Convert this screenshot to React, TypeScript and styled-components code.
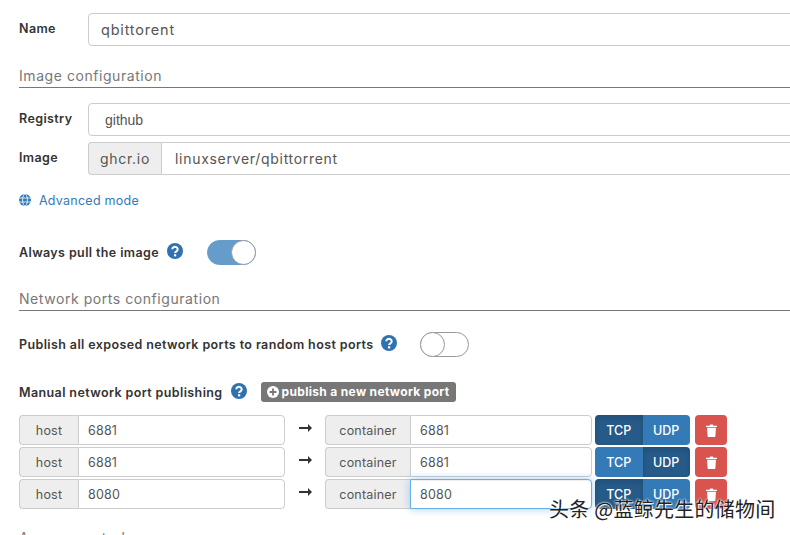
import React from "react";
import styled, { createGlobalStyle, css } from "styled-components";

const Global = createGlobalStyle`
  html, body { margin: 0; padding: 0; width: 790px; height: 535px; overflow: hidden; background: #fff; }
  body { font-family: Inter, "Liberation Sans", sans-serif; color: #333; }
`;

const Page = styled.div`
  width: 790px; height: 535px; overflow: hidden; padding: 13px 0 0 19px; box-sizing: border-box;
`;
const Column = styled.div`
  width: 790px; display: flex; flex-direction: column;
`;
const FormRow = styled.div<{ $mt?: number }>`
  display: flex; align-items: center; height: 33px; margin-top: ${p => p.$mt ?? 0}px;
`;
const Label = styled.div`
  width: 69px; flex: none; font-size: 12.5px; font-weight: 600; color: #333; margin-top: -3px; letter-spacing: .39px;
`;
const baseField = css`
  height: 33px; box-sizing: border-box; border: 1px solid #ccc; background: #fff;
  font-size: 14px; letter-spacing: .7px; color: #555; display: flex; align-items: center;
`;
const TextField = styled.div<{ $pad?: number; $sans?: boolean }>`
  ${baseField}
  flex: 1; border-radius: 4px; padding-left: ${p => p.$pad ?? 12}px; font-size: 14.5px; letter-spacing: .8px;
  ${p => p.$sans && css`font-family: "Liberation Sans", sans-serif; font-size: 14px; letter-spacing: 0;`}
`;
const Addon = styled.div`
  ${baseField}
  width: 73px; flex: none; justify-content: center; background: #eee; border-radius: 4px 0 0 4px; border-right: 0;
`;
const JoinedField = styled.div`
  ${baseField}
  flex: 1; border-radius: 0 4px 4px 0; padding-left: 13px;
`;
const SectionTitle = styled.div<{ $mt: number }>`
  margin-top: ${p => p.$mt}px; height: 21px; box-sizing: border-box; border-bottom: 1px solid #777;
  font-size: 14px; color: #777; line-height: 17px; width: 771px; letter-spacing: .56px;
`;
const LinkRow = styled.div`
  margin-top: 16px; display: flex; align-items: center; gap: 8px; height: 18px;
  font-size: 12.5px; color: #337ab7; letter-spacing: .25px;
`;
const ToggleRow = styled.div<{ $mt: number; $gap: number }>`
  margin-top: ${p => p.$mt}px; display: flex; align-items: center; height: 26px;
  font-size: 12.5px; font-weight: 600; color: #333; letter-spacing: .39px;
  & > svg { margin-left: 8px; margin-right: ${p => p.$gap}px; flex: none; margin-top: -3px; }
`;
const Switch = styled.div<{ $on?: boolean }>`
  width: 49px; height: 25px; box-sizing: border-box; border-radius: 13px; position: relative; flex: none;
  background: ${p => (p.$on ? "#659ccb" : "#fff")};
  border: 1px solid ${p => (p.$on ? "#659ccb" : "#999")};
`;
const Knob = styled.span<{ $on?: boolean }>`
  position: absolute; top: -1px; ${p => (p.$on ? "right: -1px" : "left: -1px")};
  width: 25px; height: 25px; box-sizing: border-box; border-radius: 50%; background: #fff; border: 1px solid #999;
`;
const ManualRow = styled.div`
  margin-top: 23px; display: flex; align-items: center; height: 24px;
  font-size: 12.5px; font-weight: 600; color: #333; letter-spacing: .39px;
  & > svg { margin-left: 8px; margin-right: 14px; flex: none; margin-top: -3px; }
`;
const PublishButton = styled.div`
  height: 20px; box-sizing: border-box; background: #777; color: #fff; border-radius: 3px; padding: 0 6px;
  display: flex; align-items: center; gap: 3px; font-size: 12px; font-weight: 700; letter-spacing: .33px; margin-top: -1px;
`;
const PortList = styled.div`
  margin-top: 11px; display: flex; flex-direction: column; gap: 2px;
`;
const PortRow = styled.div`
  display: flex; align-items: center; height: 30px;
`;
const PortGroup = styled.div<{ $w: number }>`
  display: flex; width: ${p => p.$w}px; flex: none; height: 30px;
`;
const PortAddon = styled.div<{ $w: number }>`
  width: ${p => p.$w}px; flex: none; box-sizing: border-box; background: #eee; border: 1px solid #ccc; border-right: 0;
  border-radius: 4px 0 0 4px; font-size: 12.5px; color: #555; display: flex; align-items: center; justify-content: center; letter-spacing: .2px;
`;
const PortInput = styled.div<{ $focus?: boolean }>`
  flex: 1; box-sizing: border-box; background: #fff; border: 1px solid ${p => (p.$focus ? "#66afe9" : "#ccc")};
  border-radius: 0 4px 4px 0; font-size: 12.5px; color: #555; display: flex; align-items: center; padding-left: 9px; letter-spacing: .2px;
  ${p => p.$focus && css`box-shadow: 0 0 8px rgba(102,175,233,.6), inset 0 1px 1px rgba(0,0,0,.07);`}
`;
const Arrow = styled.div`
  width: 40px; flex: none; display: flex; justify-content: center; margin-top: -4px;
`;
const ProtoGroup = styled.div`
  display: flex; width: 95px; height: 30px; margin-left: 3px; flex: none;
`;
const Proto = styled.div<{ $active?: boolean; $side: "l" | "r" }>`
  flex: 1; color: #fff; font-size: 12.5px; font-weight: 500; display: flex; align-items: center; justify-content: center;
  background: ${p => (p.$active ? "#265a88" : "#337ab7")};
  border-radius: ${p => (p.$side === "l" ? "4px 0 0 4px" : "0 4px 4px 0")};
  ${p => p.$active && css`box-shadow: inset 0 3px 5px rgba(0,0,0,.125);`}
`;
const DeleteButton = styled.div`
  width: 32px; height: 30px; margin-left: 5px; background: #d9534f; border-radius: 4px; flex: none;
  display: flex; align-items: center; justify-content: center;
`;
const Clipped = styled.div`
  margin-top: 20px; font-size: 14px; line-height: 17px; color: #777; letter-spacing: .56px;
`;
const Watermark = styled.div`
  position: absolute; left: 549px; top: 497px; font-family: "Noto Sans CJK SC", sans-serif; font-size: 20px; letter-spacing: .25px; line-height: 24px; color: #222;
  white-space: nowrap; text-shadow: 0 0 2px #fff, 0 0 2px #fff, 1px 1px 1px #fff;
`;

const Help = () => (
  <svg width="16" height="16" viewBox="0 0 16 16">
    <circle cx="8" cy="8" r="8" fill="#2f72b2" />
    <path d="M5.3 6.2a2.7 2.5 0 1 1 4.2 2.1c-.9.6-1.4.9-1.4 1.8" fill="none" stroke="#fff" strokeWidth="2" />
    <rect x="7" y="11.2" width="2.2" height="2.2" fill="#fff" />
  </svg>
);
const Globe = () => (
  <svg width="12" height="12" viewBox="0 0 12 12" fill="none">
    <circle cx="6" cy="6" r="6" fill="#337ab7" />
    <ellipse cx="6" cy="6" rx="2.4" ry="6" stroke="#fff" strokeWidth=".8" />
    <path d="M0 4h12M0 8h12" stroke="#fff" strokeWidth=".8" />
  </svg>
);
const RightArrow = () => (
  <svg width="13" height="8" viewBox="0 0 13 8"><path d="M0 3h9V0l4 4-4 4V5H0z" fill="#333" /></svg>
);
const Trash = () => (
  <svg width="11" height="13" viewBox="0 0 11 13" fill="#fff">
    <path d="M0 1.8h3.6L4.2.4h2.6l.6 1.4H11V3H0z" />
    <path d="M1 3.7h9l-.6 8.3c0 .6-.4 1-1 1H2.6c-.6 0-1-.4-1-1z" />
  </svg>
);
const Plus = () => (
  <svg width="12" height="12" viewBox="0 0 12 12">
    <circle cx="6" cy="6" r="6" fill="#fff" />
    <path d="M6 2.6v6.8M2.6 6h6.8" stroke="#777" strokeWidth="1.8" />
  </svg>
);

const ports = [
  { host: "6881", container: "6881", tcp: true, focus: false },
  { host: "6881", container: "6881", tcp: false, focus: false },
  { host: "8080", container: "8080", tcp: true, focus: true },
];

export default function App() {
  return (
    <>
      <Global />
      <Page>
        <Column>
          <FormRow>
            <Label>Name</Label>
            <TextField>qbittorent</TextField>
          </FormRow>
          <SectionTitle $mt={21}>Image configuration</SectionTitle>
          <FormRow $mt={15}>
            <Label>Registry</Label>
            <TextField $pad={16} $sans>github</TextField>
          </FormRow>
          <FormRow $mt={6}>
            <Label>Image</Label>
            <Addon>ghcr.io</Addon>
            <JoinedField>linuxserver/qbittorrent</JoinedField>
          </FormRow>
          <LinkRow><Globe />Advanced mode</LinkRow>
          <ToggleRow $mt={30} $gap={24}>
            Always pull the image<Help />
            <Switch $on><Knob $on /></Switch>
          </ToggleRow>
          <SectionTitle $mt={25}>Network ports configuration</SectionTitle>
          <ToggleRow $mt={20} $gap={23}>
            Publish all exposed network ports to random host ports<Help />
            <Switch><Knob /></Switch>
          </ToggleRow>
          <ManualRow>
            Manual network port publishing<Help />
            <PublishButton><Plus /> publish a new network port</PublishButton>
          </ManualRow>
          <PortList>
            {ports.map((p, i) => (
              <PortRow key={i}>
                <PortGroup $w={266}>
                  <PortAddon $w={59}>host</PortAddon>
                  <PortInput>{p.host}</PortInput>
                </PortGroup>
                <Arrow><RightArrow /></Arrow>
                <PortGroup $w={267}>
                  <PortAddon $w={85}>container</PortAddon>
                  <PortInput $focus={p.focus}>{p.container}</PortInput>
                </PortGroup>
                <ProtoGroup>
                  <Proto $side="l" $active={p.tcp}>TCP</Proto>
                  <Proto $side="r" $active={!p.tcp}>UDP</Proto>
                </ProtoGroup>
                <DeleteButton><Trash /></DeleteButton>
              </PortRow>
            ))}
          </PortList>
          <Clipped>Access control</Clipped>
        </Column>
      </Page>
      <Watermark>头条 @蓝鲸先生的储物间</Watermark>
    </>
  );
}
